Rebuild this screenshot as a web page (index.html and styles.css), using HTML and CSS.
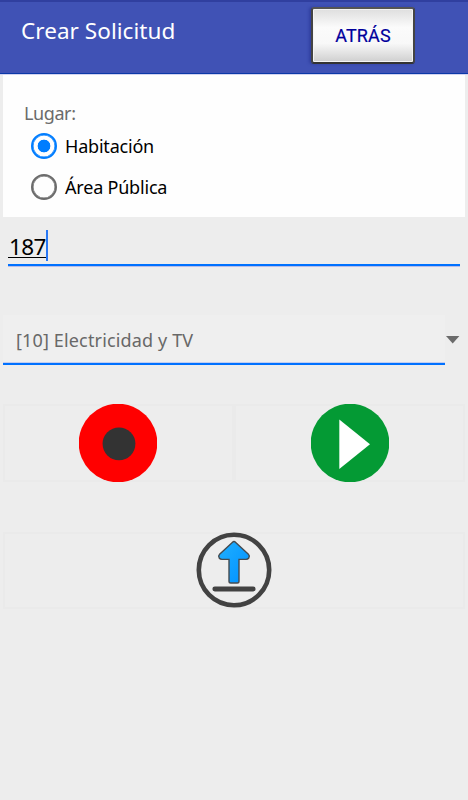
FILE: index.html
```html
<!DOCTYPE html>
<html lang="es">
<head>
<meta charset="utf-8">
<title>Crear Solicitud</title>
<link rel="stylesheet" href="styles.css">
</head>
<body>
<header class="bar">
  <h1 class="title"><span>Crear Solicitud</span></h1>
  <button class="back"><span>ATRÁS</span></button>
</header>
<main>
  <section class="place">
    <div class="label"><span>Lugar:</span></div>
    <div class="option"><i class="radio on"></i><span>Habitación</span></div>
    <div class="option"><i class="radio"></i><span>Área Pública</span></div>
  </section>
  <div class="room"><span class="number">187</span><i class="caret"></i></div>
  <div class="select">
    <div class="value"><span>[10] Electricidad y TV</span></div>
    <svg class="arrow" width="14" height="8" viewBox="0 0 14 8"><path d="M0 0H13.4L6.7 7.4Z" fill="#6b6b6b"/></svg>
  </div>
  <div class="audio">
    <div class="cell record"><svg width="78" height="78" viewBox="0 0 78 78"><circle cx="39" cy="39" r="39.3" fill="#f00"/><circle cx="40" cy="39.8" r="16.4" fill="#333"/></svg></div>
    <div class="cell"><svg width="78" height="78" viewBox="0 0 78 78"><circle cx="39" cy="39" r="39.3" fill="#049a34"/><path d="M28.3 15.5L59 40.3L28.3 65Z" fill="#fff"/></svg></div>
  </div>
  <div class="send">
    <svg width="76" height="76" viewBox="0 0 76 76">
      <defs><linearGradient id="blue" x1="0" y1="0" x2="1" y2="1"><stop offset="0" stop-color="#20b0ff"/><stop offset="1" stop-color="#0090ff"/></linearGradient></defs>
      <circle cx="38" cy="38" r="35.2" fill="none" stroke="#424242" stroke-width="4.6"/>
      <path d="M36.3 10.4Q38 8.8 39.7 10.4L52.4 22.3Q54 24 52.8 26Q51.8 27.4 50 27.4H43V49.2Q43 51 41.2 51H34.8Q33 51 33 49.2V27.4H26Q24.2 27.4 23.2 26Q22 24 23.6 22.3Z" fill="url(#blue)" stroke="#454b50" stroke-width="1.4"/>
      <path d="M18.8 57H57.2" stroke="#424242" stroke-width="4.8" stroke-linecap="round"/>
    </svg>
  </div>
</main>
</body>
</html>
```
FILE: styles.css
```css
* { box-sizing: border-box; }
body { margin: 0; height: 800px; background: #ededed; font-family: "Noto Sans", sans-serif; }
span { white-space: nowrap; }
svg { display: block; }
.bar { height: 75px; display: flex; justify-content: space-between; align-items: flex-start; padding: 5px 53px 0 21px; background: #4052b5; border-top: 2px solid #303f9f; border-bottom: 1px solid #d3d3f0; box-shadow: inset 0 -1px #0b39a8; }
.title { margin: 9px 0 0; font-size: 22.5px; line-height: 30px; font-weight: 400; letter-spacing: 0.05px; color: #fff; }
.back { width: 104px; height: 57px; padding: 0; border: 2px solid; border-color: #555 #444 #333; border-radius: 3px; background: linear-gradient(#dedede, #fbfbfb 35%, #f8f8f8 65%, #cfcfcf); box-shadow: inset 0 0 0 1px #f4f4f4, -2px 0 3px #303f9f; color: #00009c; font: 400 18px/53px Roboto, sans-serif; letter-spacing: 0.15px; -webkit-text-stroke: 0.2px #00009c; }
.place { margin: 0 3px; height: 142px; padding: 25px 20px 0; background: #fefefe; }
.label { height: 25px; line-height: 26px; padding-left: 1px; font-size: 18px; letter-spacing: -0.4px; color: #6b6b6b; }
.option { height: 41.5px; padding-left: 8px; display: flex; align-items: center; gap: 8px; font-size: 18px; letter-spacing: -0.2px; color: #000; }
.radio { width: 26px; height: 26px; border: 2.5px solid #6b6b6b; border-radius: 50%; box-shadow: inset 0 0 0 0.5px #6b6b6b; }
.radio.on { border-color: #007dff; background: radial-gradient(circle, #007dff 6px, transparent 6.7px); box-shadow: inset 0 0 0 0.5px #007dff; }
.room { height: 48px; margin: 1px 8px 0; padding-top: 12px; display: flex; align-items: flex-start; border-bottom: 2px solid #0071ff; box-shadow: 0 1px #b9bde8; }
.number { height: 28px; line-height: 33px; padding-left: 1px; font-size: 22.5px; letter-spacing: -0.6px; border-bottom: 1px solid #000; color: #000; }
.caret { width: 2px; height: 31px; background: #2878f5; }
.select { margin: 49px 8px 0 3px; height: 50px; display: flex; align-items: center; justify-content: space-between; }
.value { width: 442px; height: 50px; padding-left: 13px; line-height: 51px; font-size: 18px; letter-spacing: 0.15px; color: #686868; background: #efefef; border-bottom: 2px solid #0071ff; box-shadow: inset 0 -1px #c3cdf0; }
.audio { display: flex; margin: 39px 3px 0; }
.cell { flex: 1; height: 78px; display: flex; justify-content: center; border: 2px solid #eaeaea; }
.cell svg { margin-top: -2px; }
.record svg { margin-right: 1px; }
.send { margin: 50px 3px 0; height: 77px; display: flex; justify-content: center; border: 2px solid #eaeaea; }
.send svg { margin-top: -2px; }
```
